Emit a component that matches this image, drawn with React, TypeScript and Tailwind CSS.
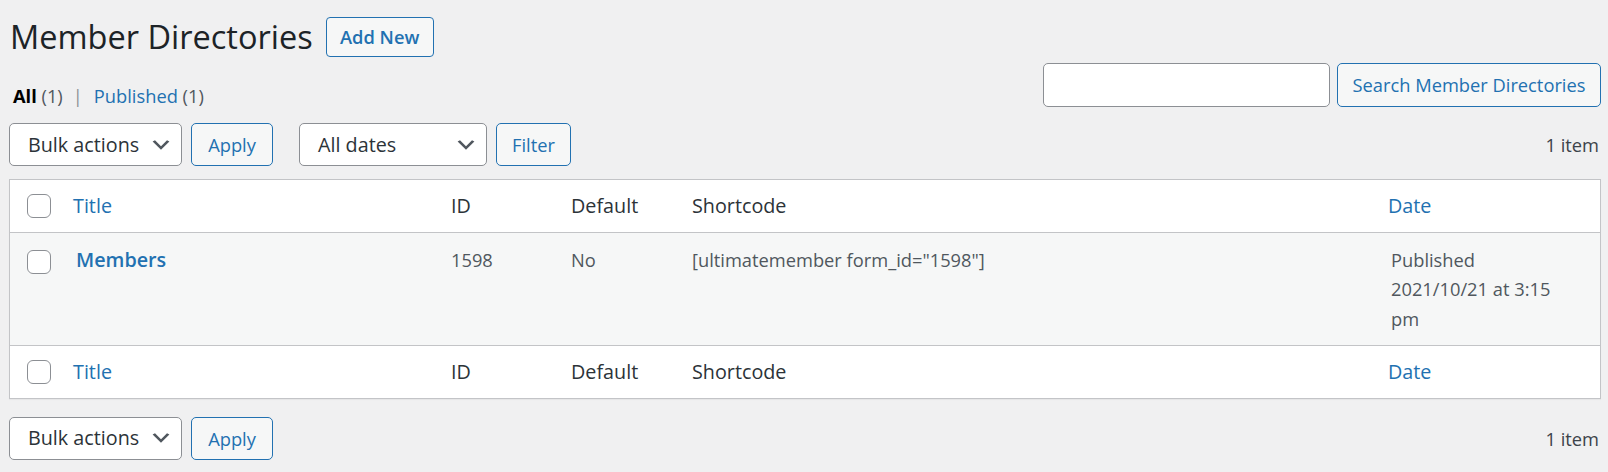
import { useState } from "react";

const FONT = "font-['Open_Sans','Noto_Sans',sans-serif]";

function Chevron() {
  return (
    <svg width="24" height="24" viewBox="0 0 20 20" className="shrink-0">
      <path d="M5 6l5 5 5-5 2 1-7 7-7-7 2-1z" fill="#50575e" />
    </svg>
  );
}

function Select({ label, width }: { label: string; width: string }) {
  return (
    <div
      className={`${width} flex h-[43px] items-center justify-between rounded-[5px] border border-[#8c8f94] bg-white pl-[18px] pr-[8px] text-[19.75px] text-[#2c3338]`}
    >
      <span>{label}</span>
      <Chevron />
    </div>
  );
}

function Button({ children, className = "" }: { children: React.ReactNode; className?: string }) {
  return (
    <button
      className={`flex h-[43px] items-center justify-center whitespace-nowrap rounded-[5px] border border-[#2271b1] bg-[#f6f7f7] px-[15px] text-[18.3px] text-[#2271b1] ${className}`}
    >
      {children}
    </button>
  );
}

function Checkbox() {
  return <span className="block h-[24px] w-[24px] rounded-[6px] border border-[#8c8f94] bg-white" />;
}

function BulkNav({ withFilter }: { withFilter?: boolean }) {
  return (
    <div className="flex h-[43px] items-center justify-between">
      <div className="flex items-center">
        <Select label="Bulk actions" width="w-[173px]" />
        <Button className="ml-[9px] w-[82px]">Apply</Button>
        {withFilter && (
          <>
            <div className="ml-[26px]">
              <Select label="All dates" width="w-[188px]" />
            </div>
            <Button className="ml-[9px] w-[75px]">Filter</Button>
          </>
        )}
      </div>
      <span className="pr-[2px] text-[18.3px] text-[#3c434a]">1 item</span>
    </div>
  );
}

function HeadRow({ pos }: { pos: "head" | "foot" }) {
  const edge = pos === "head" ? "border-b" : "border-t";
  const th = `h-[53px] ${edge} border-[#c3c4c7] p-0 text-left align-middle font-normal text-[19.75px]`;
  return (
    <tr>
      <td className={`${th} w-[51px]`}>
        <div className="pl-[17px]">
          <Checkbox />
        </div>
      </td>
      <th className={`${th} w-[375px] pl-[12px] text-[#2271b1]`}>Title</th>
      <th className={`${th} w-[120px] pl-[15px] text-[#2c3338]`}>ID</th>
      <th className={`${th} w-[121px] pl-[15px] text-[#2c3338]`}>Default</th>
      <th className={`${th} pl-[15px] text-[#2c3338]`}>Shortcode</th>
      <th className={`${th} w-[224px] pl-[12px] text-[#2271b1]`}>Date</th>
    </tr>
  );
}

export default function App() {
  const [query, setQuery] = useState("");
  const td = "px-[15px] py-[12px] align-top leading-[29.25px] text-[18.3px] text-[#50575e]";

  return (
    <div className={`${FONT} h-[472px] overflow-hidden bg-[#f0f0f1] pl-[9px] pr-[7px] pt-[17px]`}>
      <div className="flex items-center">
        <h1 className="pl-[1px] text-[32.5px] leading-[40px] font-normal text-[#1d2327]">Member Directories</h1>
        <button className="ml-[13px] h-[40px] w-[108px] rounded-[4px] border border-[#2271b1] bg-[#f6f7f7] text-[18.3px] font-semibold text-[#2271b1]">
          Add New
        </button>
      </div>

      <div className="mt-[6px] flex items-end justify-between">
        <ul className="flex items-center pl-[4px] text-[18.3px] leading-[22px] text-[#50575e]">
          <li>
            <span className="font-bold text-black">All</span> (1)
            <span className="ml-[10px] mr-[11px] text-[#8c8f94]">|</span>
          </li>
          <li>
            <span className="text-[#2271b1]">Published</span> (1)
          </li>
        </ul>
        <div className="flex items-center">
          <input
            value={query}
            onChange={(e) => setQuery(e.target.value)}
            className="h-[44px] w-[287px] rounded-[5px] border border-[#8c8f94] bg-white px-[12px] text-[19.75px] outline-none"
          />
          <Button className="ml-[7px] h-[44px] w-[264px]">Search Member Directories</Button>
        </div>
      </div>

      <div className="mt-[16px]">
        <BulkNav withFilter />
      </div>

      <table className="mt-[13px] w-full table-fixed border-separate border-spacing-0 border border-[#c3c4c7] bg-white shadow-[0_1px_1px_rgba(0,0,0,0.04)]">
        <thead>
          <HeadRow pos="head" />
        </thead>
        <tbody>
          <tr className="bg-[#f6f7f7]">
            <td className="px-0 pt-[17px] align-top">
              <div className="pl-[17px]">
                <Checkbox />
              </div>
            </td>
            <td className={td}>
              <span className="text-[19.75px] font-semibold text-[#2271b1]">Members</span>
            </td>
            <td className={td}>1598</td>
            <td className={td}>No</td>
            <td className={td}>[ultimatemember form_id="1598"]</td>
            <td className={td}>
              Published
              <br />
              2021/10/21 at 3:15
              <br />
              pm
            </td>
          </tr>
        </tbody>
        <tfoot>
          <HeadRow pos="foot" />
        </tfoot>
      </table>

      <div className="mt-[18px]">
        <BulkNav />
      </div>
    </div>
  );
}
